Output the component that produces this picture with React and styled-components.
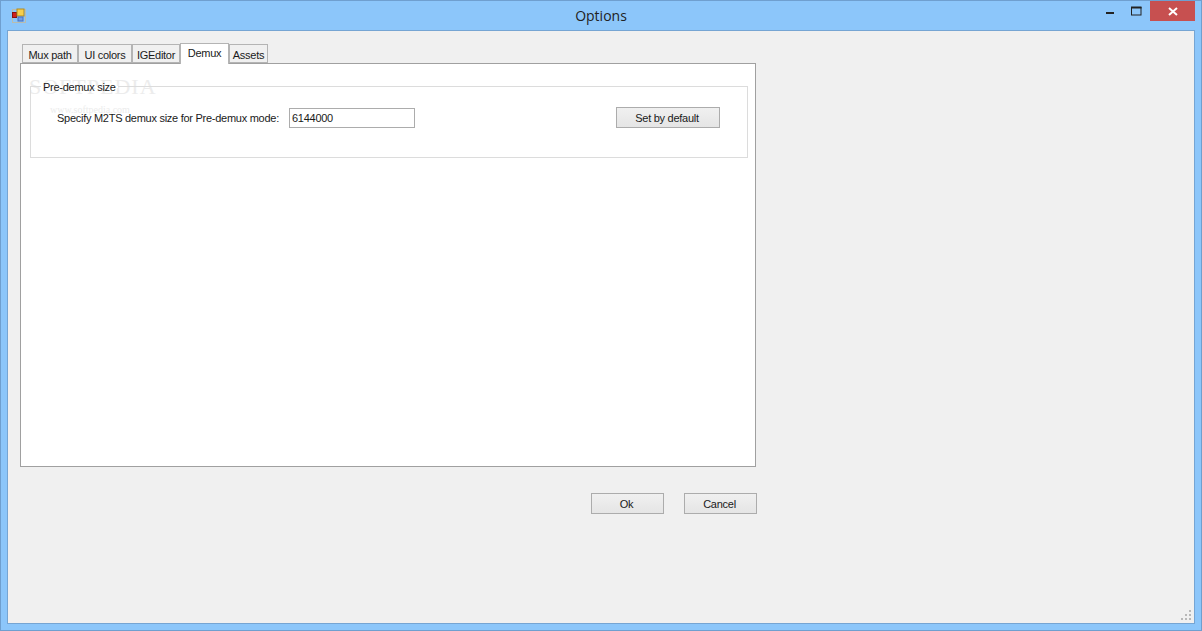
import React from "react";
import styled, { createGlobalStyle } from "styled-components";

const GlobalStyle = createGlobalStyle`
  html, body { margin: 0; padding: 0; overflow: hidden; }
  body { font-family: "Liberation Sans", Arial, sans-serif; font-size: 11px; letter-spacing: -0.27px; color: #1a1a1a; }
`;

const Frame = styled.div`
  box-sizing: border-box;
  width: 1202px;
  height: 631px;
  display: flex;
  flex-direction: column;
  background: #8cc6fa;
  border: 1px solid #6f9fcf;
`;

const TitleBar = styled.div`
  position: relative;
  height: 29px;
  flex: none;
  display: flex;
  align-items: center;
  justify-content: center;
`;

const AppIcon = styled.svg`
  position: absolute;
  left: 10px;
  top: 7px;
`;

const Title = styled.div`
  font-family: "Open Sans", sans-serif;
  font-size: 14px;
  letter-spacing: 0;
  color: #222;
  margin-top: -1px;
`;

const Controls = styled.div`
  position: absolute;
  right: 6px;
  top: 0;
  display: flex;
`;

const Control = styled.div`
  width: ${p => p.$w}px;
  height: 20px;
  display: flex;
  align-items: center;
  justify-content: center;
  background: ${p => p.$close ? "#c75050" : "transparent"};
`;

const Client = styled.div`
  position: relative;
  flex: 1;
  margin: 0 6px 6px 6px;
  padding: 12px 12px 0 12px;
  background: #f0f0f0;
  border: 1px solid #76a5d3;
`;

const Tabs = styled.div`
  display: flex;
  align-items: flex-end;
  height: 21px;
  padding-left: 2px;
  margin-bottom: -1px;
  position: relative;
  z-index: 1;
`;

const Tab = styled.div`
  box-sizing: border-box;
  width: ${p => p.$w}px;
  height: ${p => p.$active ? 21 : 19}px;
  margin-bottom: ${p => p.$active ? 0 : 1}px;
  padding-top: ${p => p.$active ? 2 : 3}px;
  text-align: center;
  line-height: 14px;
  background: ${p => p.$active ? "#fff" : "#f0f0f0"};
  border: 1px solid #b4b4b4;
  border-bottom: ${p => p.$active ? "none" : "1px solid #b4b4b4"};
`;

const Panel = styled.div`
  box-sizing: border-box;
  position: relative;
  width: 736px;
  height: 404px;
  padding: 22px 7px 0 9px;
  background: #fff;
  border: 1px solid #a0a0a0;
`;

const Group = styled.div`
  box-sizing: border-box;
  position: relative;
  width: 718px;
  height: 72px;
  padding: 21px 27px 0 26px;
  border: 1px solid #dcdcdc;
  display: flex;
  align-items: center;
`;

const GroupRow = styled.div`
  display: flex;
  align-items: center;
  width: 100%;
  margin-top: -30px;
`;

/* only hides the group's top line, so the watermark stays visible behind the text */
const Legend = styled.span`
  position: absolute;
  left: 10px;
  top: -7px;
  padding: 0 2px;
  background: linear-gradient(transparent 6px, #fff 6px, #fff 8px, transparent 8px);
  line-height: 14px;
`;

const Label = styled.span`
  width: 232px;
  flex: none;
  white-space: nowrap;
`;

const Field = styled.div`
  box-sizing: border-box;
  width: 126px;
  height: 20px;
  padding-left: 2px;
  line-height: 18px;
  background: #fff;
  border: 1px solid #acacac;
`;

const Button = styled.div`
  box-sizing: border-box;
  width: ${p => p.$w}px;
  height: 21px;
  padding-right: 2px;
  line-height: 20px;
  text-align: center;
  background: linear-gradient(#f0f0f0, #e5e5e5);
  border: 1px solid #acacac;
`;

const PushRight = styled.div`
  margin-left: auto;
`;

const Footer = styled.div`
  display: flex;
  justify-content: flex-end;
  gap: 20px;
  width: 737px;
  margin-top: 26px;
`;

const Watermark = styled.div`
  position: absolute;
  left: 8px;
  top: 12px;
  color: #ececec;
  pointer-events: none;
  font-family: "Liberation Serif", serif;
  letter-spacing: 0;
`;

const WatermarkName = styled.div`
  font-size: 22px;
  letter-spacing: 1px;
  line-height: 22px;
`;

const WatermarkUrl = styled.div`
  font-size: 10px;
  margin: 6px 0 0 21px;
`;

const Grip = styled.svg`
  position: absolute;
  right: 1px;
  bottom: 1px;
`;

const App = () => {
  return (
    <>
      <GlobalStyle />
      <Frame>
        <TitleBar>
          <AppIcon width="16" height="16" viewBox="0 0 16 16">
            <rect x="1.5" y="1.5" width="13" height="13" fill="none" stroke="#b9bcae" strokeWidth="1" />
            <rect x="1.5" y="4.5" width="4" height="5" fill="#d02020" stroke="#8a1010" />
            <rect x="6" y="1" width="7" height="7" fill="#f7cf4c" stroke="#b08a20" />
            <rect x="7" y="9" width="5" height="4" fill="#6f9fe8" stroke="#4a70c0" />
          </AppIcon>
          <Title>Options</Title>
          <Controls>
            <Control $w={27}>
              <svg width="10" height="10" viewBox="0 0 10 10"><rect x="1" y="6" width="8" height="2" fill="#222" /></svg>
            </Control>
            <Control $w={27}>
              <svg width="11" height="10" viewBox="0 0 11 10"><rect x="0.5" y="1.5" width="9.5" height="7.5" fill="none" stroke="#222" /><rect x="0" y="0.5" width="10.5" height="2" fill="#222" /></svg>
            </Control>
            <Control $w={45} $close>
              <svg width="10" height="9" viewBox="0 0 10 9"><path d="M1 1l8 7M9 1l-8 7" stroke="#fff" strokeWidth="2" /></svg>
            </Control>
          </Controls>
        </TitleBar>
        <Client>
          <Tabs>
            <Tab $w={56}>Mux path</Tab>
            <Tab $w={54}>UI colors</Tab>
            <Tab $w={48}>IGEditor</Tab>
            <Tab $w={49} $active>Demux</Tab>
            <Tab $w={39}>Assets</Tab>
          </Tabs>
          <Panel>
            <Watermark>
              <WatermarkName>SOFTPEDIA</WatermarkName>
              <WatermarkUrl>www.softpedia.com</WatermarkUrl>
            </Watermark>
            <Group>
              <Legend>Pre-demux size</Legend>
              <GroupRow>
                <Label>Specify M2TS demux size for Pre-demux mode:</Label>
                <Field>6144000</Field>
                <PushRight>
                  <Button $w={104}>Set by default</Button>
                </PushRight>
              </GroupRow>
            </Group>
          </Panel>
          <Footer>
            <Button $w={73}>Ok</Button>
            <Button $w={73}>Cancel</Button>
          </Footer>
          <Grip width="12" height="12" viewBox="0 0 12 12" fill="#b8b8b8">
            <rect x="8" y="0" width="2" height="2" />
            <rect x="4" y="4" width="2" height="2" />
            <rect x="8" y="4" width="2" height="2" />
            <rect x="0" y="8" width="2" height="2" />
            <rect x="4" y="8" width="2" height="2" />
            <rect x="8" y="8" width="2" height="2" />
          </Grip>
        </Client>
      </Frame>
    </>
  );
};

export default App;
